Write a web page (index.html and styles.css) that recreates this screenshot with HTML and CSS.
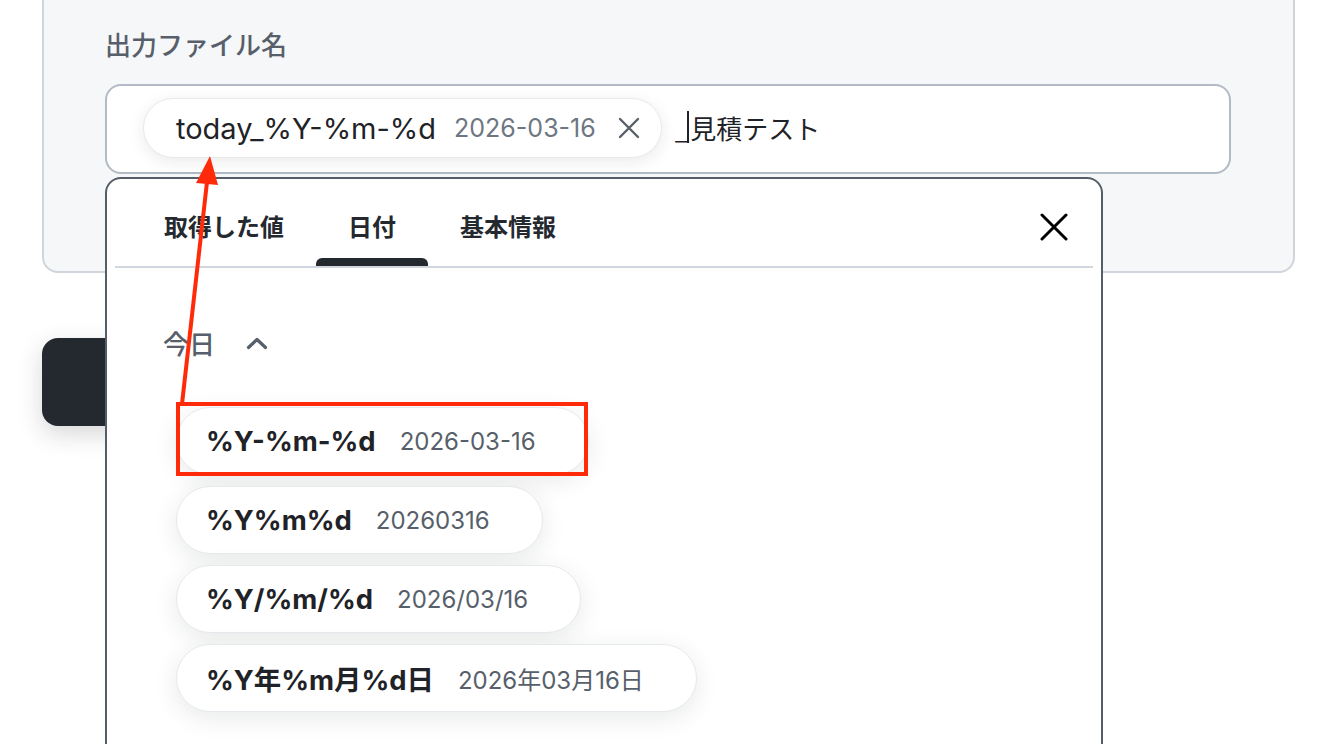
FILE: index.html
```html
<!DOCTYPE html>
<html lang="ja">
<head>
<meta charset="utf-8">
<title>出力ファイル名</title>
<link rel="stylesheet" href="styles.css">
</head>
<body>
<div class="page">
  <section class="card">
    <div class="field-label">出力ファイル名</div>
    <div class="input">
      <span class="tag">
        <span class="tag-key">today_%Y-%m-%d</span>
        <span class="tag-val">2026-03-16</span>
        <svg class="tag-x" viewBox="0 0 22 22" width="22" height="22"><path d="M2 2 L20 20 M20 2 L2 20" stroke="#57606a" stroke-width="2.4" stroke-linecap="round" fill="none"/></svg>
      </span>
      <span class="typed">_<span class="caret"></span>見積テスト</span>
    </div>
  </section>

  <button class="save-btn" type="button"></button>

  <div class="popover">
    <div class="tabs">
      <div class="tab">取得した値</div>
      <div class="tab active">日付</div>
      <div class="tab">基本情報</div>
      <svg class="close" viewBox="0 0 28 28" width="28" height="28"><path d="M2 2 L26 26 M26 2 L2 26" stroke="#000" stroke-width="3" stroke-linecap="round" fill="none"/></svg>
    </div>
    <div class="pop-body">
      <div class="group-head">
        <span>今日</span>
        <svg class="chev" viewBox="0 0 22 14" width="22" height="14"><path d="M2.5 11.5 L11 3.5 L19.5 11.5" stroke="#57606a" stroke-width="3.2" stroke-linecap="round" stroke-linejoin="round" fill="none"/></svg>
      </div>
      <div class="options">
        <div class="opt"><span class="opt-key">%Y-%m-%d</span><span class="opt-val">2026-03-16</span></div>
        <div class="opt"><span class="opt-key">%Y%m%d</span><span class="opt-val">20260316</span></div>
        <div class="opt"><span class="opt-key">%Y/%m/%d</span><span class="opt-val">2026/03/16</span></div>
        <div class="opt"><span class="opt-key">%Y年%m月%d日</span><span class="opt-val">2026年03月16日</span></div>
      </div>
    </div>
  </div>

  <svg class="annot" viewBox="0 0 1336 744" width="1336" height="744">
    <line x1="182" y1="404" x2="207" y2="182" stroke="#ff2a0a" stroke-width="4"/>
    <polygon points="210,156 196,183 218,185" fill="#ff2a0a"/>
    <rect x="178" y="404" width="408" height="70" fill="none" stroke="#ff2a0a" stroke-width="4"/>
  </svg>
</div>
</body>
</html>
```

FILE: styles.css
```css
* { box-sizing: border-box; }
html, body { margin: 0; padding: 0; background: #ffffff; }
body {
  font-family: "Inter", "Noto Sans CJK JP", sans-serif;
  color: #1f2328;
  width: 1336px;
  height: 744px;
  overflow: hidden;
}
.page { position: relative; width: 1336px; height: 744px; }

.card {
  margin-left: 42px;
  width: 1253px;
  background: #f6f7f9;
  border: 2px solid #d0d5dc;
  border-top: none;
  border-radius: 0 0 16px 16px;
  padding: 28px 62px 97px 61px;
}
.field-label {
  font-family: "Noto Sans CJK JP", sans-serif;
  font-size: 26px;
  line-height: 32px;
  font-weight: 500;
  color: #57606a;
}
.input {
  margin-top: 24px;
  height: 90px;
  background: #fff;
  border: 2px solid #b2bac5;
  border-radius: 16px;
  display: flex;
  align-items: center;
  padding-left: 36px;
}
.tag {
  display: inline-flex;
  align-items: center;
  height: 60px;
  margin-top: -2px;
  padding: 0 21px 0 32px;
  background: #fff;
  border: 1.5px solid #e6e9ee;
  border-radius: 30px;
  box-shadow: 0 4px 16px rgba(31, 35, 40, 0.09);
}
.tag-key { font-size: 29px; color: #1f2328; }
.tag-val { font-size: 25px; color: #6e7781; margin-left: 18px; }
.tag-x { margin-left: 22px; }
.typed {
  margin-left: 13px;
  margin-top: -4px;
  font-family: "Noto Sans CJK JP", sans-serif;
  font-size: 26px;
  color: #1f2328;
  display: inline-flex;
  align-items: center;
}
.caret {
  display: inline-block;
  width: 2px;
  height: 32px;
  background: #1f2328;
  margin: 0 1px 0 -2px;
}

.save-btn {
  display: block;
  margin: 65px 0 0 42px;
  width: 240px;
  height: 88px;
  border: none;
  border-radius: 16px;
  background: #24292f;
  box-shadow: 0 8px 24px rgba(31, 35, 40, 0.18);
}

.popover {
  position: absolute;
  left: 105px;
  top: 177px;
  width: 998px;
  height: 640px;
  background: #fff;
  border: 2px solid #545d68;
  border-radius: 16px;
  z-index: 2;
}
.tabs {
  display: flex;
  align-items: flex-start;
  margin: 0 8px;
  padding-left: 17px;
  border-bottom: 2px solid #d0d7de;
}
.tab {
  position: relative;
  padding: 31px 32px 24px;
  font-family: "Noto Sans CJK JP", sans-serif;
  font-size: 24px;
  line-height: 32px;
  font-weight: 700;
  color: #24292f;
}
.tab.active::after {
  content: "";
  position: absolute;
  left: 0;
  right: 0;
  bottom: 0;
  height: 8px;
  background: #24292f;
  border-radius: 6px 6px 0 0;
}
.close { margin: 34px 25px 0 auto; }

.pop-body { padding-left: 56px; }
.group-head {
  margin-top: 59px;
  display: flex;
  align-items: center;
  font-family: "Noto Sans CJK JP", sans-serif;
  font-size: 26px;
  line-height: 32px;
  font-weight: 500;
  color: #57606a;
}
.chev { margin-left: 31px; }
.options {
  margin-top: 48px;
  padding-left: 13px;
  display: flex;
  flex-direction: column;
  align-items: flex-start;
  gap: 11px;
}
.opt {
  display: inline-flex;
  align-items: center;
  height: 68px;
  padding: 0 52px 0 29px;
  background: #fff;
  border: 1.5px solid #e6e9ee;
  border-radius: 34px;
  box-shadow: 0 6px 24px rgba(31, 35, 40, 0.1);
}
.opt-key { font-size: 27.4px; font-weight: 700; color: #1f2328; }
.opt-val { font-size: 24px; color: #57606a; margin-left: 24px; }

.annot {
  position: absolute;
  left: 0;
  top: 0;
  z-index: 5;
  pointer-events: none;
}
```
